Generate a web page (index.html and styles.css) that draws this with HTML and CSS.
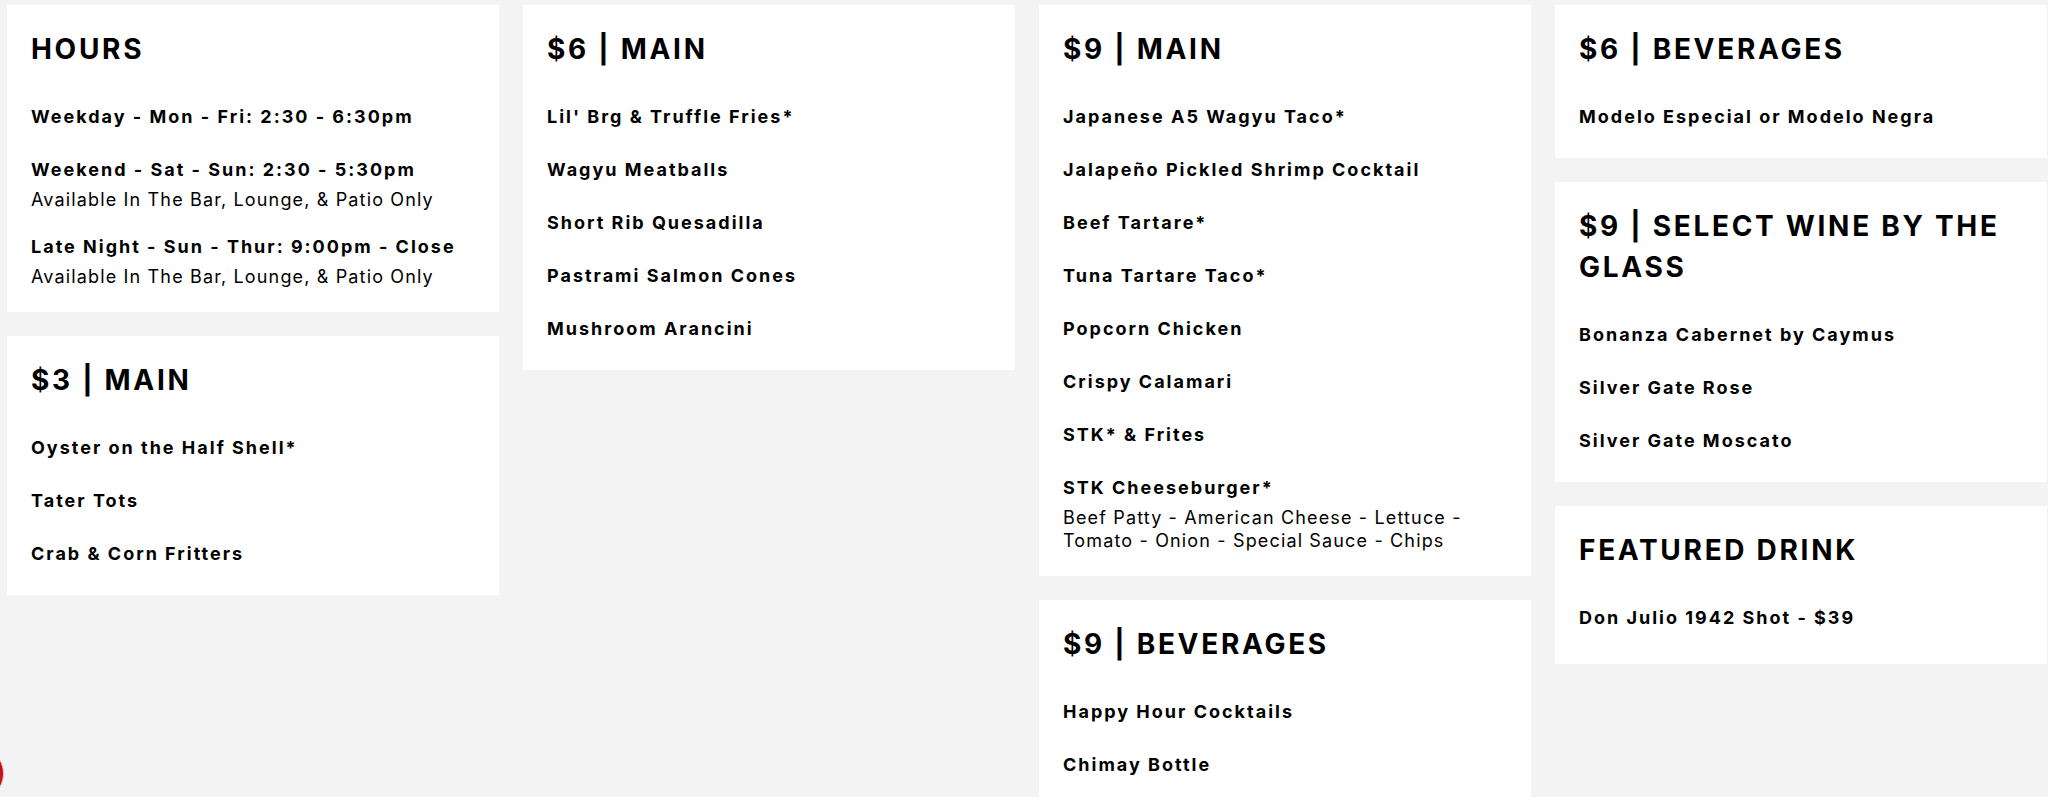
FILE: index.html
```html
<!DOCTYPE html>
<html lang="en">
<head>
<meta charset="utf-8">
<title>Happy Hour Menu</title>
<link rel="stylesheet" href="styles.css">
</head>
<body>
<main class="menu">
  <div class="col">
    <section class="card">
      <h2 class="card-title">HOURS</h2>
      <ul class="items">
        <li class="item"><p class="item-name">Weekday - Mon - Fri: 2:30 - 6:30pm</p></li>
        <li class="item"><p class="item-name">Weekend - Sat - Sun: 2:30 - 5:30pm</p><p class="item-desc">Available In The Bar, Lounge, &amp; Patio Only</p></li>
        <li class="item"><p class="item-name">Late Night - Sun - Thur: 9:00pm - Close</p><p class="item-desc">Available In The Bar, Lounge, &amp; Patio Only</p></li>
      </ul>
    </section>
    <section class="card">
      <h2 class="card-title">$3 | MAIN</h2>
      <ul class="items">
        <li class="item"><p class="item-name">Oyster on the Half Shell*</p></li>
        <li class="item"><p class="item-name">Tater Tots</p></li>
        <li class="item"><p class="item-name">Crab &amp; Corn Fritters</p></li>
      </ul>
    </section>
  </div>
  <div class="col">
    <section class="card">
      <h2 class="card-title">$6 | MAIN</h2>
      <ul class="items">
        <li class="item"><p class="item-name">Lil' Brg &amp; Truffle Fries*</p></li>
        <li class="item"><p class="item-name">Wagyu Meatballs</p></li>
        <li class="item"><p class="item-name">Short Rib Quesadilla</p></li>
        <li class="item"><p class="item-name">Pastrami Salmon Cones</p></li>
        <li class="item"><p class="item-name">Mushroom Arancini</p></li>
      </ul>
    </section>
  </div>
  <div class="col">
    <section class="card">
      <h2 class="card-title">$9 | MAIN</h2>
      <ul class="items">
        <li class="item"><p class="item-name">Japanese A5 Wagyu Taco*</p></li>
        <li class="item"><p class="item-name">Jalapeño Pickled Shrimp Cocktail</p></li>
        <li class="item"><p class="item-name">Beef Tartare*</p></li>
        <li class="item"><p class="item-name">Tuna Tartare Taco*</p></li>
        <li class="item"><p class="item-name">Popcorn Chicken</p></li>
        <li class="item"><p class="item-name">Crispy Calamari</p></li>
        <li class="item"><p class="item-name">STK* &amp; Frites</p></li>
        <li class="item"><p class="item-name">STK Cheeseburger*</p><p class="item-desc">Beef Patty - American Cheese - Lettuce - Tomato - Onion - Special Sauce - Chips</p></li>
      </ul>
    </section>
    <section class="card">
      <h2 class="card-title">$9 | BEVERAGES</h2>
      <ul class="items">
        <li class="item"><p class="item-name">Happy Hour Cocktails</p></li>
        <li class="item"><p class="item-name">Chimay Bottle</p></li>
      </ul>
    </section>
  </div>
  <div class="col">
    <section class="card">
      <h2 class="card-title">$6 | BEVERAGES</h2>
      <ul class="items">
        <li class="item"><p class="item-name">Modelo Especial or Modelo Negra</p></li>
      </ul>
    </section>
    <section class="card">
      <h2 class="card-title">$9 | SELECT WINE BY THE GLASS</h2>
      <ul class="items">
        <li class="item"><p class="item-name">Bonanza Cabernet by Caymus</p></li>
        <li class="item"><p class="item-name">Silver Gate Rose</p></li>
        <li class="item"><p class="item-name">Silver Gate Moscato</p></li>
      </ul>
    </section>
    <section class="card card--loose">
      <h2 class="card-title">FEATURED DRINK</h2>
      <ul class="items">
        <li class="item"><p class="item-name">Don Julio 1942 Shot - $39</p></li>
      </ul>
    </section>
  </div>
</main>
<div class="fab" aria-hidden="true"></div>
</body>
</html>
```
FILE: styles.css
```css
* { box-sizing: border-box; }

html, body {
  margin: 0;
  padding: 0;
}

body {
  background: #f3f3f3;
  color: #000;
  font-family: Inter, "DejaVu Sans", sans-serif;
  overflow: hidden;
  height: 797px;
}

.menu {
  display: grid;
  grid-template-columns: repeat(4, 492px);
  column-gap: 24px;
  padding: 5px 0 0 7px;
  align-items: start;
}

.col {
  display: flex;
  flex-direction: column;
  gap: 24px;
}

.card {
  background: #fff;
  padding: 24px;
}

.card--loose {
  padding-bottom: 29px;
}

.card-title {
  margin: 0 0 30.4px;
  font-size: 28px;
  line-height: 40.6px;
  font-weight: 700;
  letter-spacing: 2.7px;
}

.items {
  list-style: none;
  margin: 0;
  padding: 0;
  display: flex;
  flex-direction: column;
  gap: 19px;
}

.item-name {
  margin: 0;
  font-size: 18px;
  line-height: 34px;
  font-weight: 700;
  letter-spacing: 2px;
}

.item-desc {
  margin: 1px 0 0;
  font-size: 18px;
  line-height: 23px;
  font-weight: 400;
  letter-spacing: 1.15px;
}

.fab {
  position: fixed;
  left: -51px;
  top: 746px;
  width: 55px;
  height: 55px;
  border-radius: 50%;
  background: #c1121f;
  border: 1px solid #e3b8b8;
}
```
